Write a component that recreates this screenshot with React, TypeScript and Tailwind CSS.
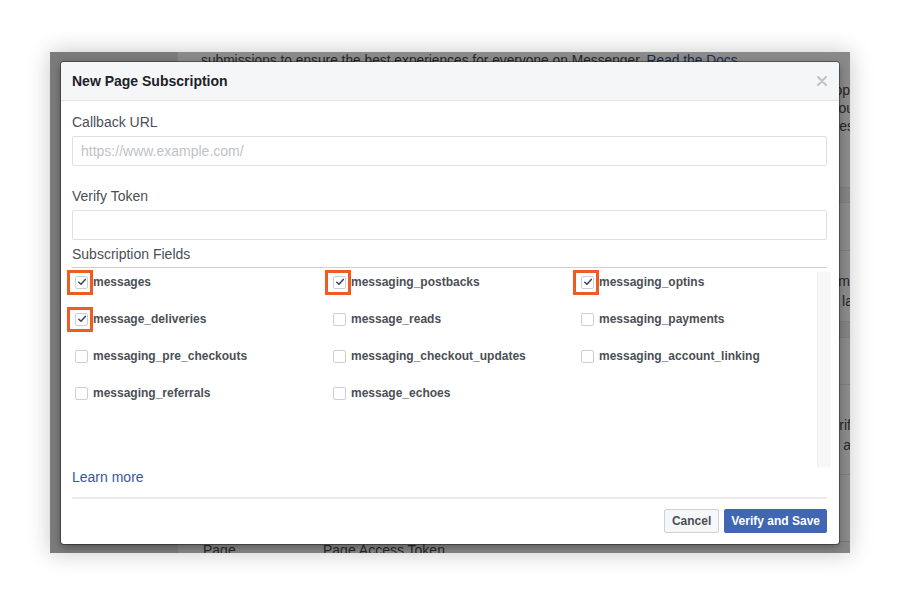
import React from "react";

type Field = { name: string; checked?: boolean };

const rows: Field[][] = [
  [{ name: "messages", checked: true }, { name: "messaging_postbacks", checked: true }, { name: "messaging_optins", checked: true }],
  [{ name: "message_deliveries", checked: true }, { name: "message_reads" }, { name: "messaging_payments" }],
  [{ name: "messaging_pre_checkouts" }, { name: "messaging_checkout_updates" }, { name: "messaging_account_linking" }],
  [{ name: "messaging_referrals" }, { name: "message_echoes" }],
];

function Checkbox({ checked }: { checked?: boolean }) {
  return (
    <span className="relative flex h-[13px] w-[13px] shrink-0 items-center justify-center rounded-[2px] border border-[#ccd0d5] bg-white">
      {checked ? (
        <svg width="10" height="10" viewBox="0 0 10 10" fill="none">
          <path d="M1.8 5.2 L4 7.3 L8.3 2.4" stroke="#3b4563" strokeWidth="1.5" strokeLinecap="round" strokeLinejoin="round" />
        </svg>
      ) : null}
      {/* orange highlight around the ticked boxes */}
      {checked ? <span className="pointer-events-none absolute -left-[9px] -top-[7px] h-[25px] w-[26px] border-[3px] border-[#ee5b24]" /> : null}
    </span>
  );
}

function Modal() {
  return (
    <div className="absolute left-[11px] top-[10px] w-[778px] overflow-hidden rounded-[3px] bg-white shadow-[0_0_0_1px_rgba(0,0,0,0.35),0_3px_10px_rgba(0,0,0,0.35)]">
      <div className="flex h-[39px] items-center justify-between border-b border-[#e5e5e5] bg-[#f5f6f7] pl-[11px] pr-[12px]">
        <h1 className="text-[14px] font-bold text-[#1d2129]">New Page Subscription</h1>
        <svg width="10" height="10" viewBox="0 0 10 10">
          <path d="M1 1 L9 9 M9 1 L1 9" stroke="#bec2c9" strokeWidth="2" strokeLinecap="round" />
        </svg>
      </div>

      <div className="pl-[11px] pr-[12px]">
        <p className="mt-[12px] text-[14px] leading-[18px] text-[#4b4f56]">Callback URL</p>
        <input
          placeholder="https://www.example.com/"
          className="mt-[5px] block h-[30px] w-full rounded-[2px] border border-[#dddfe2] px-[8px] text-[14px] text-[#1d2129] outline-none placeholder:text-[#bec2c9]"
        />
        <p className="mt-[21px] text-[14px] leading-[18px] text-[#4b4f56]">Verify Token</p>
        <input className="mt-[5px] block h-[30px] w-full rounded-[2px] border border-[#dddfe2] px-[8px] text-[14px] outline-none" />
        <p className="mt-[5px] text-[14px] leading-[18px] text-[#4b4f56]">Subscription Fields</p>

        <div className="mt-[4px] flex h-[202px] border-t border-[#ccd0d5]">
          <div className="flex flex-1 flex-col gap-[11px] pl-[3px] pt-[1px]">
            {rows.map((row, i) => (
              <div key={i} className="grid h-[26px] grid-cols-[258px_248px_1fr] items-center">
                {row.map((f) => (
                  <label key={f.name} className="flex items-center gap-[5px] text-[12px] font-bold text-[#4b4f56]">
                    <Checkbox checked={f.checked} />
                    {f.name}
                  </label>
                ))}
              </div>
            ))}
          </div>
          <div className="-mr-[4px] mt-[4px] h-[195px] w-[14px] border-l border-[#eeeeee] bg-[#f7f7f7]" />
        </div>

        <a href="#" className="block text-[14px] leading-[16px] text-[#365899]">Learn more</a>
        <div className="mt-[12px] h-[2px] bg-[#e9ebee]" />

        <div className="mt-[10px] flex justify-end gap-[5px] pb-[11px]">
          <button className="h-[24px] rounded-[2px] border border-[#ced0d4] bg-[#f6f7f9] px-[7px] text-[12px] font-bold text-[#4b4f56]">Cancel</button>
          <button className="h-[24px] rounded-[2px] border border-[#4267b2] bg-[#4267b2] px-[6px] text-[12px] font-bold text-white">Verify and Save</button>
        </div>
      </div>
    </div>
  );
}

export default function App() {
  return (
    <div className="flex h-[603px] w-[900px] items-start bg-white pl-[50px] pt-[52px] font-['Liberation_Sans',Arial,sans-serif]">
      <div className="relative flex h-[501px] w-[800px] overflow-hidden shadow-[0_0_22px_rgba(0,0,0,0.22)]">
        <div className="w-[128px] bg-[#7b7b7b]" />
        <div className="flex flex-1 flex-col bg-[#8a8a8a] text-[14px] text-[#262626]">
          <p className="h-[18px] pl-[23px] text-[13.75px] leading-[18px]">
            submissions to ensure the best experiences for everyone on Messenger. <span className="text-[#1c2b4e]">Read the Docs</span>
          </p>
          <div className="-mr-[4px] mt-[11px] text-right leading-[18px]">
            <p>Select the events you would like to receive and opt</p>
            <p>Webhooks will be sent to the callback URL you</p>
            <p>for each of the pages and the subscribed features</p>
          </div>
          <div className="mt-[52px] h-[16px] border-y border-[#7d7d7d] bg-[#828282]" />
          <div className="mt-[47px] border-t border-[#7d7d7d]" />
          <div className="-mr-[3px] mt-[20px] text-right leading-[20px]">
            <p>You can subscribe to mi</p>
            <p>pages you are an admin of to la</p>
          </div>
          <div className="mt-[10px] h-[17px] border-y border-[#7d7d7d] bg-[#828282]" />
          <div className="mt-[46px] border-t border-[#7d7d7d]" />
          <div className="-mr-[1px] mt-[30px] text-right leading-[20px]">
            <p>Token generation is verif</p>
            <p>a</p>
          </div>
          <div className="mt-[19px] border-t border-[#7d7d7d]" />
          <div className="mt-auto flex h-[12px] border-t border-[#7a7a7a] bg-[#868686] leading-[16px]">
            <span className="w-[145px] pl-[25px]">Page</span>
            <span>Page Access Token</span>
          </div>
        </div>
        <Modal />
      </div>
    </div>
  );
}
